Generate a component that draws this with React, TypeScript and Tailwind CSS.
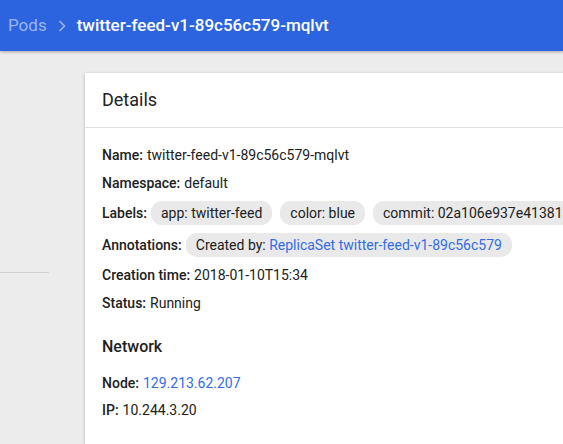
import React from 'react';

const labels = ['app: twitter-feed', 'color: blue', 'commit: 02a106e937e41381312d0a1d1b1c'];

function Row({ label, children }: { label: string; children: React.ReactNode }) {
  return (
    <div className="flex items-center gap-[4px] whitespace-nowrap min-h-[20px]">
      <span className="font-medium text-[#212121]">{label}</span>
      {children}
    </div>
  );
}

function Chip({ children }: { children: React.ReactNode }) {
  return (
    <span className="inline-flex items-center h-[24px] px-[10px] rounded-[11px] bg-[#e9e9e9] text-[#212121] whitespace-nowrap">
      {children}
    </span>
  );
}

export default function App() {
  return (
    <div
      className="w-[563px] h-[444px] overflow-hidden bg-[#ececec] flex flex-col"
      style={{ fontFamily: 'Roboto, "Noto Sans", sans-serif' }}
    >
      {/* Toolbar */}
      <header className="h-[51px] shrink-0 bg-[#2c64e0] flex items-center pl-[8px] gap-[10px] text-[17px] shadow-[0_1px_3px_rgba(0,0,0,0.3)] relative z-10">
        <span className="text-[#9bb5f0]">Pods</span>
        <svg width="10" height="14" viewBox="0 0 10 14" className="text-[#9bb5f0]">
          <path d="M2.5 2 L7.5 7 L2.5 12" fill="none" stroke="currentColor" strokeWidth="1.6" />
        </svg>
        <span className="text-white font-medium">twitter-feed-v1-89c56c579-mqlvt</span>
      </header>

      <div className="flex flex-1 min-h-0">
        {/* Side nav stub */}
        <aside className="w-[49px] shrink-0 flex flex-col pt-[221px]">
          <div className="h-px bg-[#d0d0d0]" />
        </aside>

        {/* Card */}
        <main className="ml-[36px] mt-[22px] w-[700px] shrink-0 bg-white shadow-[0_1px_3px_rgba(0,0,0,0.25)] text-[14px] leading-[20px] text-[#212121]">
          <div className="h-[55px] flex items-center px-[17px] border-b border-[#e0e0e0]">
            <h2 className="text-[18px] text-[#212121]">Details</h2>
          </div>
          <div className="px-[17px] pt-[17px] flex flex-col gap-[8px]">
            <Row label="Name:">
              <span>twitter-feed-v1-89c56c579-mqlvt</span>
            </Row>
            <Row label="Namespace:">
              <span>default</span>
            </Row>
            <Row label="Labels:">
              <div className="flex gap-[8px]">
                {labels.map((l) => (
                  <Chip key={l}>{l}</Chip>
                ))}
              </div>
            </Row>
            <Row label="Annotations:">
              <Chip>
                Created by:&nbsp;<span className="text-[#326de6]">ReplicaSet twitter-feed-v1-89c56c579</span>
              </Chip>
            </Row>
            <Row label="Creation time:">
              <span>2018-01-10T15:34</span>
            </Row>
            <Row label="Status:">
              <span>Running</span>
            </Row>
          </div>

          <div className="px-[17px] pt-[24px]">
            <h3 className="text-[16px] font-medium text-[#212121] h-[20px] flex items-center">Network</h3>
            <div className="pt-[16px] flex flex-col gap-[7px]">
              <Row label="Node:">
                <span className="text-[#326de6]">129.213.62.207</span>
              </Row>
              <Row label="IP:">
                <span>10.244.3.20</span>
              </Row>
            </div>
          </div>
        </main>
      </div>
    </div>
  );
}
